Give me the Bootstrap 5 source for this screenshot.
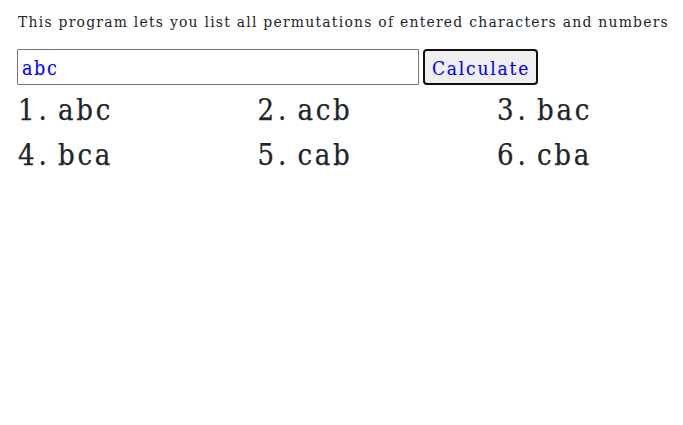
<!DOCTYPE html>
<html lang="en">
<head>
<meta charset="utf-8">
<meta name="viewport" content="width=device-width, initial-scale=1">
<title>Permutations</title>
<link href="https://cdn.jsdelivr.net/npm/bootstrap@5.3.0/dist/css/bootstrap.min.css" rel="stylesheet">
<style>
body, input, button { font-family: "DejaVu Serif Condensed", "DejaVu Serif", serif; font-stretch: condensed; }
body { padding: 10px 0 0 17px; }
.intro { font-size: 15.5px; line-height: 24px; letter-spacing: 1.23px; margin-bottom: 15px; padding-left: 1px; }
.entry { width: 402px; height: 36px; border: 1px solid #767676; padding: 3px 4px 1px; color: #00f; font-size: 19.5px; letter-spacing: 1.6px; border-radius: 1px; -webkit-text-stroke: .1px; }
.calc { width: 115px; height: 36px; border: 2px solid #101010; border-radius: 4px; background: #efefef; color: #00f; font-size: 19px; letter-spacing: 1.8px; padding: 2px 0 0 1px; -webkit-text-stroke: .1px; }
.results { display: grid; grid-template-columns: 239.5px 239.5px 1fr; font-size: 29px; line-height: 45px; letter-spacing: 2.7px; padding: 3px 0 0 1px; -webkit-text-stroke: .25px; }
.num { width: 40px; letter-spacing: 4px; }
</style>
</head>
<body>
<p class="intro text-nowrap">This program lets you list all permutations of entered characters and numbers</p>
<div class="d-flex gap-1">
<input class="entry" type="text" value="abc" aria-label="Characters">
<button class="calc" type="button">Calculate</button>
</div>
<div class="results">
<div class="d-flex"><span class="num">1.</span><span>abc</span></div>
<div class="d-flex"><span class="num">2.</span><span>acb</span></div>
<div class="d-flex"><span class="num">3.</span><span>bac</span></div>
<div class="d-flex"><span class="num">4.</span><span>bca</span></div>
<div class="d-flex"><span class="num">5.</span><span>cab</span></div>
<div class="d-flex"><span class="num">6.</span><span>cba</span></div>
</div>
<script src="https://cdn.jsdelivr.net/npm/bootstrap@5.3.0/dist/js/bootstrap.bundle.min.js"></script>
</body>
</html>
